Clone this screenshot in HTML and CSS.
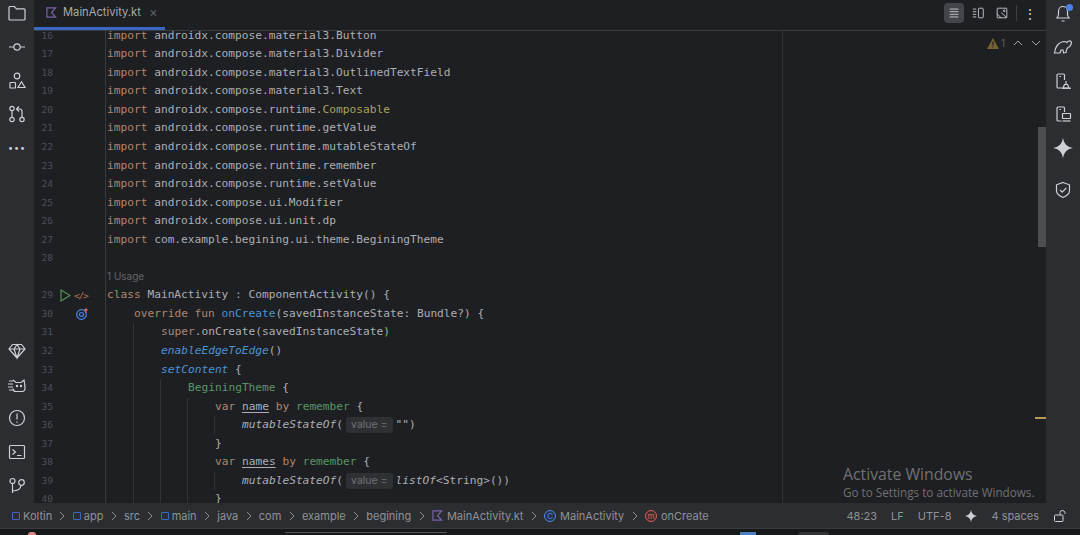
FILE: index.html
```html
<!DOCTYPE html>
<html lang="en">
<head>
    <meta charset="UTF-8">
    <meta name="viewport" content="width=device-width, initial-scale=1.0">
    <title>MainActivity.kt</title>
    <link rel="stylesheet" href="styles.css">
</head>
<body>
    <svg class="sprite" aria-hidden="true">
        <symbol id="i-folder" viewBox="0 0 20 20"><path d="M2 16V4.500q0-1 1-1h4.500l2 2.300H17q1 0 1 1V16q0 1-1 1H3q-1 0-1-1z"/></symbol>
        <symbol id="i-commit" viewBox="0 0 20 20"><circle cx="10" cy="10" r="3.200"/><path d="M2 10h4.800M13.200 10H18"/></symbol>
        <symbol id="i-structure" viewBox="0 0 20 20"><circle cx="10" cy="5" r="2.800"/><rect x="3" y="11.500" width="5.500" height="5.500" rx=".6"/><path d="M14.500 10.800l3.500 5.700h-7z"/></symbol>
        <symbol id="i-pull" viewBox="0 0 20 20"><circle cx="5" cy="4.500" r="2.200"/><circle cx="5" cy="15.500" r="2.200"/><circle cx="15" cy="15.500" r="2.200"/><path d="M5 6.700v6.600M15 13.300V7.500q0-2.500-2.500-2.500H10M12 2.500L9.500 5l2.500 2.500"/></symbol>
        <symbol id="i-diamond" viewBox="0 0 20 20"><path d="M5.500 3.500h9l3.500 4.500-8 9-8-9zM2 8h16M7 8l3 9 3-9M7 8l3-4.500L13 8"/></symbol>
        <symbol id="i-cat" viewBox="0 0 20 20"><path d="M6 5l3 2.500h5L17 5q1 5 1 8 0 3.500-3 3.500H9q-3 0-3-3M1 9h5M1 12h5M2 6h4M2 15h4"/><circle cx="10" cy="11" r=".6"/><circle cx="14" cy="11" r=".6"/></symbol>
        <symbol id="i-alert" viewBox="0 0 20 20"><circle cx="10" cy="10" r="7.500"/><path d="M10 5.500v6M10 13.500v1.200"/></symbol>
        <symbol id="i-terminal" viewBox="0 0 20 20"><rect x="2.500" y="3.500" width="15" height="13" rx="1"/><path d="M5.500 7.500L8.500 10l-3 2.500M10 13.500h4.500"/></symbol>
        <symbol id="i-git" viewBox="0 0 20 20"><circle cx="5.500" cy="5" r="2.500"/><circle cx="14.500" cy="6.500" r="2.800"/><path d="M5.500 7.500V17M5.500 15q8 0 8.500-5.700"/></symbol>
        <symbol id="i-elephant" viewBox="0 0 20 20"><path d="M1.500 16q.5-5 3-8t6-3.500q2.500 0 3.500 1 1.500-2 3.500-1.500 1.500 1 .5 3.500t-3 3q-1.500 1-2 5l-2.500.3-.5-2.800H8l-1 3H2.500z"/></symbol>
        <symbol id="i-device" viewBox="0 0 20 20"><path d="M9 17H5q-1 0-1-1V4q0-1 1-1h5.500q1 0 1 1v5"/><path d="M6.500 5.500h1.500M10 17l1.500-3.500h3L16 17zM13 13.500V10"/><path d="M9 17.300h9"/></symbol>
        <symbol id="i-mirror" viewBox="0 0 20 20"><path d="M8.500 17H5q-1 0-1-1V4q0-1 1-1h5.500q1 0 1 1v4"/><path d="M6.500 5.500h1.500"/><rect x="9.500" y="9.500" width="8" height="5" rx=".5"/><path d="M9.500 17h8"/></symbol>
        <symbol id="i-shield" viewBox="0 0 20 20"><path d="M10 2.500l6.500 2.300v6q0 4-6.500 6.700-6.500-2.700-6.500-6.700v-6z"/><path d="M7 10l2.200 2.200L13.200 8"/></symbol>
        <symbol id="i-lines" viewBox="0 0 16 16"><path d="M3 3.500h10M3 6.500h10M3 9.500h10M3 12.500h10"/></symbol>
        <symbol id="i-split" viewBox="0 0 16 16"><rect x="8.500" y="2.500" width="5.500" height="11" rx="1"/><path d="M2 3.500h4M2 6.500h4M2 9.500h4M2 12.500h4"/></symbol>
        <symbol id="i-image" viewBox="0 0 16 16"><rect x="2.500" y="2.500" width="11" height="11" rx=".5"/><path d="M2.500 9L7 13.500M7 7.500l6.500 6"/><circle cx="10.500" cy="5.500" r="1"/></symbol>
        <symbol id="i-kotlin" viewBox="0 0 12 12"><path d="M1 1h9.500L6 6l4.500 5H1z"/></symbol>
        <symbol id="i-chev" viewBox="0 0 6 10"><path d="M1 1l4 4-4 4"/></symbol>
        <symbol id="i-spark" viewBox="0 0 16 16"><path d="M8 0q1 7 8 8-7 1-8 8-1-7-8-8 7-1 8-8z"/></symbol>
    </svg>

    <div class="ide">
        <div class="rail">
            <div class="rail-group">
                <svg class="rail-icon"><use href="#i-folder"/></svg>
                <svg class="rail-icon"><use href="#i-commit"/></svg>
                <svg class="rail-icon"><use href="#i-structure"/></svg>
                <svg class="rail-icon"><use href="#i-pull"/></svg>
                <div class="rail-more">&#8226;&#8226;&#8226;</div>
            </div>
            <div class="rail-group">
                <svg class="rail-icon"><use href="#i-diamond"/></svg>
                <svg class="rail-icon"><use href="#i-cat"/></svg>
                <svg class="rail-icon"><use href="#i-alert"/></svg>
                <svg class="rail-icon"><use href="#i-terminal"/></svg>
                <svg class="rail-icon"><use href="#i-git"/></svg>
            </div>
        </div>

        <div class="center">
            <div class="tabs">
                <div class="tab">
                    <svg class="kt-icon"><use href="#i-kotlin"/></svg>
                    <span>MainActivity.kt</span>
                    <span class="tab-close">&#215;</span>
                </div>
                <div class="tab-tools">
                    <span class="tool active"><svg class="tool-icon"><use href="#i-lines"/></svg></span>
                    <span class="tool"><svg class="tool-icon"><use href="#i-split"/></svg></span>
                    <span class="tool"><svg class="tool-icon"><use href="#i-image"/></svg></span>
                    <span class="tool-sep"></span>
                    <span class="tool-dots">&#8942;</span>
                </div>
            </div>

            <div class="editor">
                <div class="lines">
                    <div class="row"><span class="num">16</span><span class="marks"></span><div class="code"><b>import</b> androidx.compose.material3.Button</div></div>
                    <div class="row"><span class="num">17</span><span class="marks"></span><div class="code"><b>import</b> androidx.compose.material3.Divider</div></div>
                    <div class="row"><span class="num">18</span><span class="marks"></span><div class="code"><b>import</b> androidx.compose.material3.OutlinedTextField</div></div>
                    <div class="row"><span class="num">19</span><span class="marks"></span><div class="code"><b>import</b> androidx.compose.material3.Text</div></div>
                    <div class="row"><span class="num">20</span><span class="marks"></span><div class="code"><b>import</b> androidx.compose.runtime.<span class="anno">Composable</span></div></div>
                    <div class="row"><span class="num">21</span><span class="marks"></span><div class="code"><b>import</b> androidx.compose.runtime.getValue</div></div>
                    <div class="row"><span class="num">22</span><span class="marks"></span><div class="code"><b>import</b> androidx.compose.runtime.mutableStateOf</div></div>
                    <div class="row"><span class="num">23</span><span class="marks"></span><div class="code"><b>import</b> androidx.compose.runtime.remember</div></div>
                    <div class="row"><span class="num">24</span><span class="marks"></span><div class="code"><b>import</b> androidx.compose.runtime.setValue</div></div>
                    <div class="row"><span class="num">25</span><span class="marks"></span><div class="code"><b>import</b> androidx.compose.ui.Modifier</div></div>
                    <div class="row"><span class="num">26</span><span class="marks"></span><div class="code"><b>import</b> androidx.compose.ui.unit.dp</div></div>
                    <div class="row"><span class="num">27</span><span class="marks"></span><div class="code"><b>import</b> com.example.begining.ui.theme.BeginingTheme</div></div>
                    <div class="row"><span class="num">28</span><span class="marks"></span><div class="code"></div></div>
                    <div class="row"><span class="num"></span><span class="marks"></span><div class="code usage">1 Usage</div></div>
                    <div class="row"><span class="num">29</span><span class="marks">
                        <svg class="run" viewBox="0 0 11 13"><path d="M1 1l9 5.500-9 5.500z"/></svg>
                        <span class="tag">&lt;/&gt;</span>
                    </span><div class="code"><b>class</b> MainActivity : ComponentActivity() {</div></div>
                    <div class="row"><span class="num">30</span><span class="marks">
                        <svg class="override" viewBox="0 0 12 12"><circle cx="5.500" cy="6.500" r="4.800"/><circle cx="5.500" cy="6.500" r="2"/><path class="up" d="M10 5V1M8.500 2.300L10 .8l1.500 1.500"/></svg>
                    </span><div class="code"><i class="ind"></i><b>override fun</b> <span class="fn">onCreate</span>(savedInstanceState: Bundle?) {</div></div>
                    <div class="row"><span class="num">31</span><span class="marks"></span><div class="code"><i class="ind"></i><i class="ind g"></i><b>super</b>.onCreate(savedInstanceState)</div></div>
                    <div class="row"><span class="num">32</span><span class="marks"></span><div class="code"><i class="ind"></i><i class="ind g"></i><em class="fn">enableEdgeToEdge</em>()</div></div>
                    <div class="row"><span class="num">33</span><span class="marks"></span><div class="code"><i class="ind"></i><i class="ind g"></i><em class="fn">setContent</em> {</div></div>
                    <div class="row"><span class="num">34</span><span class="marks"></span><div class="code"><i class="ind"></i><i class="ind g"></i><i class="ind g"></i><span class="call">BeginingTheme</span> {</div></div>
                    <div class="row"><span class="num">35</span><span class="marks"></span><div class="code"><i class="ind"></i><i class="ind g"></i><i class="ind g"></i><i class="ind g"></i><b>var</b> <u>name</u> <b>by</b> <span class="call">remember</span> {</div></div>
                    <div class="row"><span class="num">36</span><span class="marks"></span><div class="code"><i class="ind"></i><i class="ind g"></i><i class="ind g"></i><i class="ind g"></i><i class="ind g"></i><em>mutableStateOf</em>(<span class="hint">value =</span>"")</div></div>
                    <div class="row"><span class="num">37</span><span class="marks"></span><div class="code"><i class="ind"></i><i class="ind g"></i><i class="ind g"></i><i class="ind g"></i>}</div></div>
                    <div class="row"><span class="num">38</span><span class="marks"></span><div class="code"><i class="ind"></i><i class="ind g"></i><i class="ind g"></i><i class="ind g"></i><b>var</b> <u>names</u> <b>by</b> <span class="call">remember</span> {</div></div>
                    <div class="row"><span class="num">39</span><span class="marks"></span><div class="code"><i class="ind"></i><i class="ind g"></i><i class="ind g"></i><i class="ind g"></i><i class="ind g"></i><em>mutableStateOf</em>(<span class="hint">value =</span><em>listOf</em>&lt;String&gt;())</div></div>
                    <div class="row"><span class="num">40</span><span class="marks"></span><div class="code"><i class="ind"></i><i class="ind g"></i><i class="ind g"></i><i class="ind g"></i>}</div></div>
                </div>

                <div class="margin-line"></div>
                <div class="inspect">
                    <svg class="warn" viewBox="0 0 12 11"><path d="M6 0l6 11H0z"/><path class="warn-bang" d="M6 3.500v4M6 8.500v1"/></svg>
                    <span class="warn-n">1</span>
                    <svg class="nav" viewBox="0 0 10 6"><path d="M1 5l4-4 4 4"/></svg>
                    <svg class="nav" viewBox="0 0 10 6"><path d="M1 1l4 4 4-4"/></svg>
                </div>
                <div class="scroll-thumb"></div>
                <div class="scroll-mark"></div>
                <div class="activate">
                    <div class="activate-title">Activate Windows</div>
                    <div class="activate-sub">Go to Settings to activate Windows.</div>
                </div>
            </div>
        </div>

        <div class="rail right">
            <div class="rail-group">
                <div class="bell">
                    <svg class="rail-icon" viewBox="0 0 20 20"><path d="M4 15q1.500-1.500 1.500-4V8a4.500 4.500 0 0 1 9 0v3q0 2.500 1.500 4zM8.500 18h3"/></svg>
                    <span class="bell-dot"></span>
                </div>
                <svg class="rail-icon"><use href="#i-elephant"/></svg>
                <svg class="rail-icon"><use href="#i-device"/></svg>
                <svg class="rail-icon"><use href="#i-mirror"/></svg>
                <svg class="rail-icon spark"><use href="#i-spark"/></svg>
                <svg class="rail-icon shield"><use href="#i-shield"/></svg>
            </div>
        </div>
    </div>

    <div class="crumbs">
        <span class="mod"></span><span>Koltin</span><svg class="chev"><use href="#i-chev"/></svg>
        <span class="mod"></span><span>app</span><svg class="chev"><use href="#i-chev"/></svg>
        <span>src</span><svg class="chev"><use href="#i-chev"/></svg>
        <span class="mod"></span><span>main</span><svg class="chev"><use href="#i-chev"/></svg>
        <span>java</span><svg class="chev"><use href="#i-chev"/></svg>
        <span>com</span><svg class="chev"><use href="#i-chev"/></svg>
        <span>example</span><svg class="chev"><use href="#i-chev"/></svg>
        <span>begining</span><svg class="chev"><use href="#i-chev"/></svg>
        <svg class="kt-icon"><use href="#i-kotlin"/></svg><span>MainActivity.kt</span><svg class="chev"><use href="#i-chev"/></svg>
        <span class="badge cls">C</span><span>MainActivity</span><svg class="chev"><use href="#i-chev"/></svg>
        <span class="badge mth">m</span><span>onCreate</span>

        <div class="status">
            <span>48:23</span>
            <span>LF</span>
            <span>UTF-8</span>
            <svg class="status-spark"><use href="#i-spark"/></svg>
            <span>4 spaces</span>
            <svg class="lock" viewBox="0 0 14 14"><rect x="1.500" y="6" width="8.500" height="6.500" rx="1"/><path d="M7 6V3.500q0-2 2.200-2t2.800 2V5"/></svg>
        </div>
    </div>

    <div class="taskbar">
        <span class="peek red"></span>
        <span class="peek grey"></span>
        <span class="peek blue"></span>
        <span class="peek pill"></span>
    </div>
</body>
</html>
```

FILE: styles.css
```css
* { box-sizing: border-box; margin: 0; padding: 0; }
html, body { height: 100%; }
body { display: flex; flex-direction: column; overflow: hidden; background: #1e1f22; color: #bcbec4; font-family: Inter, sans-serif; }
.sprite { display: none; }

.ide { flex: 0 0 503px; display: flex; min-height: 0; }

/* side rails */
.rail { flex: 0 0 34px; display: flex; flex-direction: column; justify-content: space-between; align-items: center; padding: 3px 0 7px; background: #2b2d30; }
.rail-group { display: flex; flex-direction: column; align-items: center; gap: 13.8px; }
.rail-icon { display: block; width: 20px; height: 20px; fill: none; stroke: #ced0d6; stroke-width: 1.200; }
.rail-more { height: 20px; line-height: 20px; font-size: 9px; letter-spacing: 1px; color: #ced0d6; }
.spark { fill: #ced0d6; stroke: none; }
.shield { margin-top: 8px; }
.bell { position: relative; height: 20px; }
.bell-dot { position: absolute; top: 1px; right: 0; width: 7px; height: 7px; border-radius: 50%; background: #4a7fe8; }

/* tabs */
.center { flex: 1; min-width: 0; display: flex; flex-direction: column; }
.tabs { flex: 0 0 31px; display: flex; justify-content: space-between; border-bottom: 1px solid #3a3b3e; }
.tab { width: 131px; height: 30px; display: flex; align-items: center; gap: 6px; padding: 0 0 3px 12px; border-bottom: 3px solid #3a66c4; font-size: 11.200px; color: #a9abb0; }
.tab-close { margin-left: 2px; font-size: 13px; color: #5f6165; }
.kt-icon { flex: none; width: 11px; height: 11px; fill: none; stroke: #7b62ab; stroke-width: 1.300; }
.tab-tools { display: flex; align-items: center; gap: 4px; padding: 0 8px 4px 0; }
.tool { width: 20px; height: 20px; display: flex; align-items: center; justify-content: center; border-radius: 4px; }
.tool.active { background: #43454a; }
.tool-icon { width: 14px; height: 14px; fill: none; stroke: #ced0d6; stroke-width: 1; }
.tool-sep { width: 1px; height: 16px; margin-right: 1px; background: #3e4043; }
.tool-dots { width: 16px; text-align: center; font-size: 14px; color: #ced0d6; }

/* editor */
.editor { position: relative; flex: 1; min-height: 0; overflow: hidden; background: #1e1f22; }
.lines { margin-top: -4.300px; }
.row { display: flex; height: 18.550px; line-height: 18.550px; }
.num { flex: 0 0 19px; text-align: right; font: 9.500px/18.550px "DejaVu Sans Mono", monospace; color: #4b5059; }
.marks { flex: 0 0 52px; display: flex; align-items: center; gap: 3px; padding-left: 7px; }
.code { flex: 1; white-space: pre; padding-left: 1px; border-left: 1px solid #37393c; font: 11.200px/18.550px "DejaVu Sans Mono", monospace; color: #acaeb4; }
.code b { font-weight: normal; color: #b0866e; }
.code em { color: #acaeb4; }
.code u { text-underline-offset: 2px; }
.code .fn { color: #4b93d4; }
.anno { color: #a8a35c; }
.call { color: #5a9566; }
.ind { display: inline-block; width: 27px; height: 18.550px; vertical-align: top; }
.ind.g { box-shadow: -1px 0 0 #313336; }
.code.usage { font: 10px/17px Inter, sans-serif; color: #62656a; }
.hint { display: inline-block; margin: 0 3px; padding: 0 5px; height: 16px; line-height: 16px; border-radius: 3px; background: #2e3033; font: 10.500px/16px Inter, sans-serif; color: #6f7277; }

.run { flex: none; width: 11px; height: 13px; fill: none; stroke: #57965c; stroke-width: 1.100; }
.tag { font: 9.500px "DejaVu Sans Mono", monospace; letter-spacing: -1.200px; color: #b5734f; }
.override { flex: none; width: 12px; height: 12px; margin-left: 16px; fill: none; stroke: #4a86e8; stroke-width: 1.200; }
.override .up { stroke: #d9655c; }

.margin-line { position: absolute; top: 0; bottom: 0; left: 748px; width: 1px; background: #313336; }
.inspect { position: absolute; top: 6px; right: 5px; display: flex; align-items: center; gap: 8px; font-size: 10px; color: #5f6165; }
.warn { width: 12px; height: 11px; fill: #75632f; stroke: none; }
.warn-bang { fill: none; stroke: #1e1f22; stroke-width: 1.200; }
.warn-n { margin: 0 0 0 -6px; }
.nav { width: 10px; height: 6px; fill: none; stroke: #a0a2a6; stroke-width: 1; }
.scroll-thumb { position: absolute; top: 96px; right: 0; width: 8px; height: 120px; background: #4d4e51; }
.scroll-mark { position: absolute; top: 386px; right: 0; width: 11px; height: 2px; background: #b89a58; }
.activate { position: absolute; top: 433px; left: 809px; font-family: "Open Sans", sans-serif; color: #6f7174; white-space: nowrap; }
.activate-title { font-size: 15.800px; line-height: 20px; }
.activate-sub { font-size: 11.700px; line-height: 17px; }

/* breadcrumbs and status */
.crumbs { flex: 0 0 26px; display: flex; align-items: center; padding: 0 13px 0 12px; background: #2b2d30; border-bottom: 1px solid #3a3b3e; font-size: 11px; color: #909296; white-space: nowrap; }
.mod { width: 8px; height: 8px; margin-right: 3px; border: 1.200px solid #3f69c0; border-radius: 1px; }
.chev { flex: none; width: 6px; height: 10px; margin: 0 7.300px; fill: none; stroke: #8b8d91; stroke-width: 1; }
.crumbs .kt-icon { margin-right: 4px; }
.badge { flex: none; width: 12px; height: 12px; margin-right: 4px; border-radius: 50%; text-align: center; font-size: 8px; line-height: 10.500px; border: 1px solid; }
.badge.cls { color: #5588e0; background: #23324f; }
.badge.mth { color: #d9655c; background: #43262a; }
.status { margin-left: auto; display: flex; align-items: center; gap: 14px; }
.status-spark { width: 12px; height: 12px; fill: #ced0d6; }
.lock { width: 14px; height: 14px; fill: none; stroke: #ced0d6; stroke-width: 1; }

/* sliver of the taskbar under the window */
.taskbar { flex: 1; display: flex; align-items: flex-end; background: #17181a; }
.peek { height: 3px; }
.peek.red { width: 8px; margin-left: 28px; border-radius: 4px 4px 0 0; background: #d98a80; }
.peek.grey { width: 162px; height: 1px; margin-left: 249px; margin-bottom: 2px; background: #55565a; }
.peek.blue { width: 16px; margin-left: 293px; background: #4a7fb8; }
.peek.pill { width: 31px; margin-left: 42px; border-radius: 4px 4px 0 0; background: #333438; }
```
